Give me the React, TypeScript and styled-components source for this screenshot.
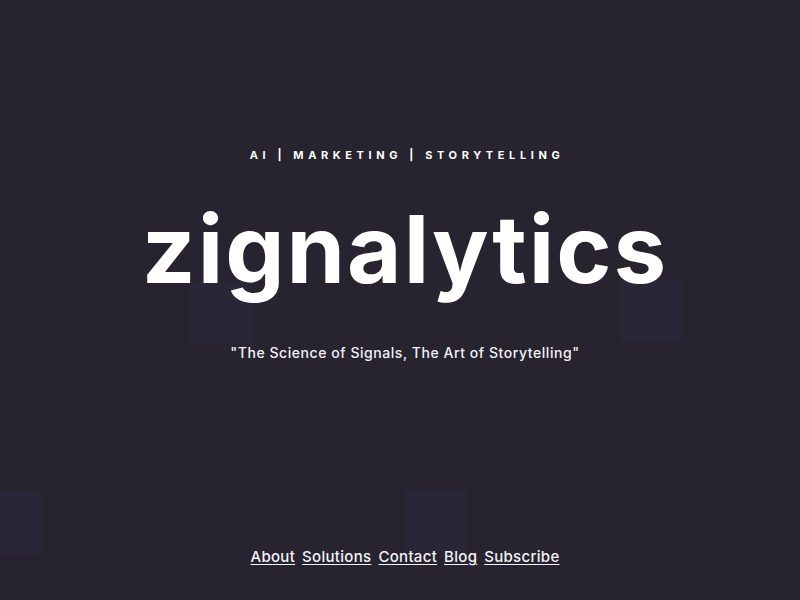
import styled, { createGlobalStyle } from 'styled-components';

const GlobalStyle = createGlobalStyle`
  html, body {
    margin: 0;
    padding: 0;
    background: #27232f;
  }
  * {
    box-sizing: border-box;
  }
`;

type Square = { left: number; top: number };

const squares: Square[] = [
  { left: 190, top: 282 },
  { left: 620, top: 280 },
  { left: -20, top: 492 },
  { left: 405, top: 490 },
];

const App = () => {
  return (
    <>
      <GlobalStyle />
      <Page>
        {squares.map((s, i) => (
          <Tile key={i} style={{ left: s.left, top: s.top }} />
        ))}
        <Hero>
          <Kicker>AI | MARKETING | STORYTELLING</Kicker>
          <Title>zignalytics</Title>
          <Quote>"The Science of Signals, The Art of Storytelling"</Quote>
        </Hero>
        <Nav>
          <NavLink href="#">About</NavLink>
          <NavLink href="#">Solutions</NavLink>
          <NavLink href="#">Contact</NavLink>
          <NavLink href="#">Blog</NavLink>
          <NavLink href="#">Subscribe</NavLink>
        </Nav>
      </Page>
    </>
  );
};

const Page = styled.div`
  position: relative;
  overflow: hidden;
  width: 100%;
  height: 600px;
  display: flex;
  flex-direction: column;
  align-items: center;
  padding: 148px 0 34px 10px;
  background: #27232f;
  color: #ffffff;
  font-family: Inter, 'Noto Sans', sans-serif;
`;

const Tile = styled.div`
  position: absolute;
  width: 62px;
  height: 62px;
  background: rgba(52, 50, 86, 0.26);
  z-index: 0;
`;

const Hero = styled.div`
  position: relative;
  z-index: 1;
  display: flex;
  flex-direction: column;
  align-items: center;
`;

const Kicker = styled.div`
  font-size: 11px;
  font-weight: 700;
  letter-spacing: 4.6px;
  line-height: 14px;
  margin-left: 4px;
`;

const Title = styled.h1`
  margin: 37px 0 0;
  font-size: 94px;
  font-weight: 700;
  letter-spacing: 2px;
  line-height: 100px;
`;

const Quote = styled.p`
  margin: 45px 0 0;
  font-size: 14px;
  font-weight: 500;
  letter-spacing: 0.55px;
  color: #f2f1f5;
`;

const Nav = styled.nav`
  position: relative;
  z-index: 1;
  margin-top: auto;
  display: flex;
  gap: 7px;
`;

const NavLink = styled.a`
  font-size: 15px;
  font-weight: 500;
  letter-spacing: 0.3px;
  color: #f4f3f7;
  text-decoration: underline;
  text-underline-offset: 2px;
`;

export default App;
